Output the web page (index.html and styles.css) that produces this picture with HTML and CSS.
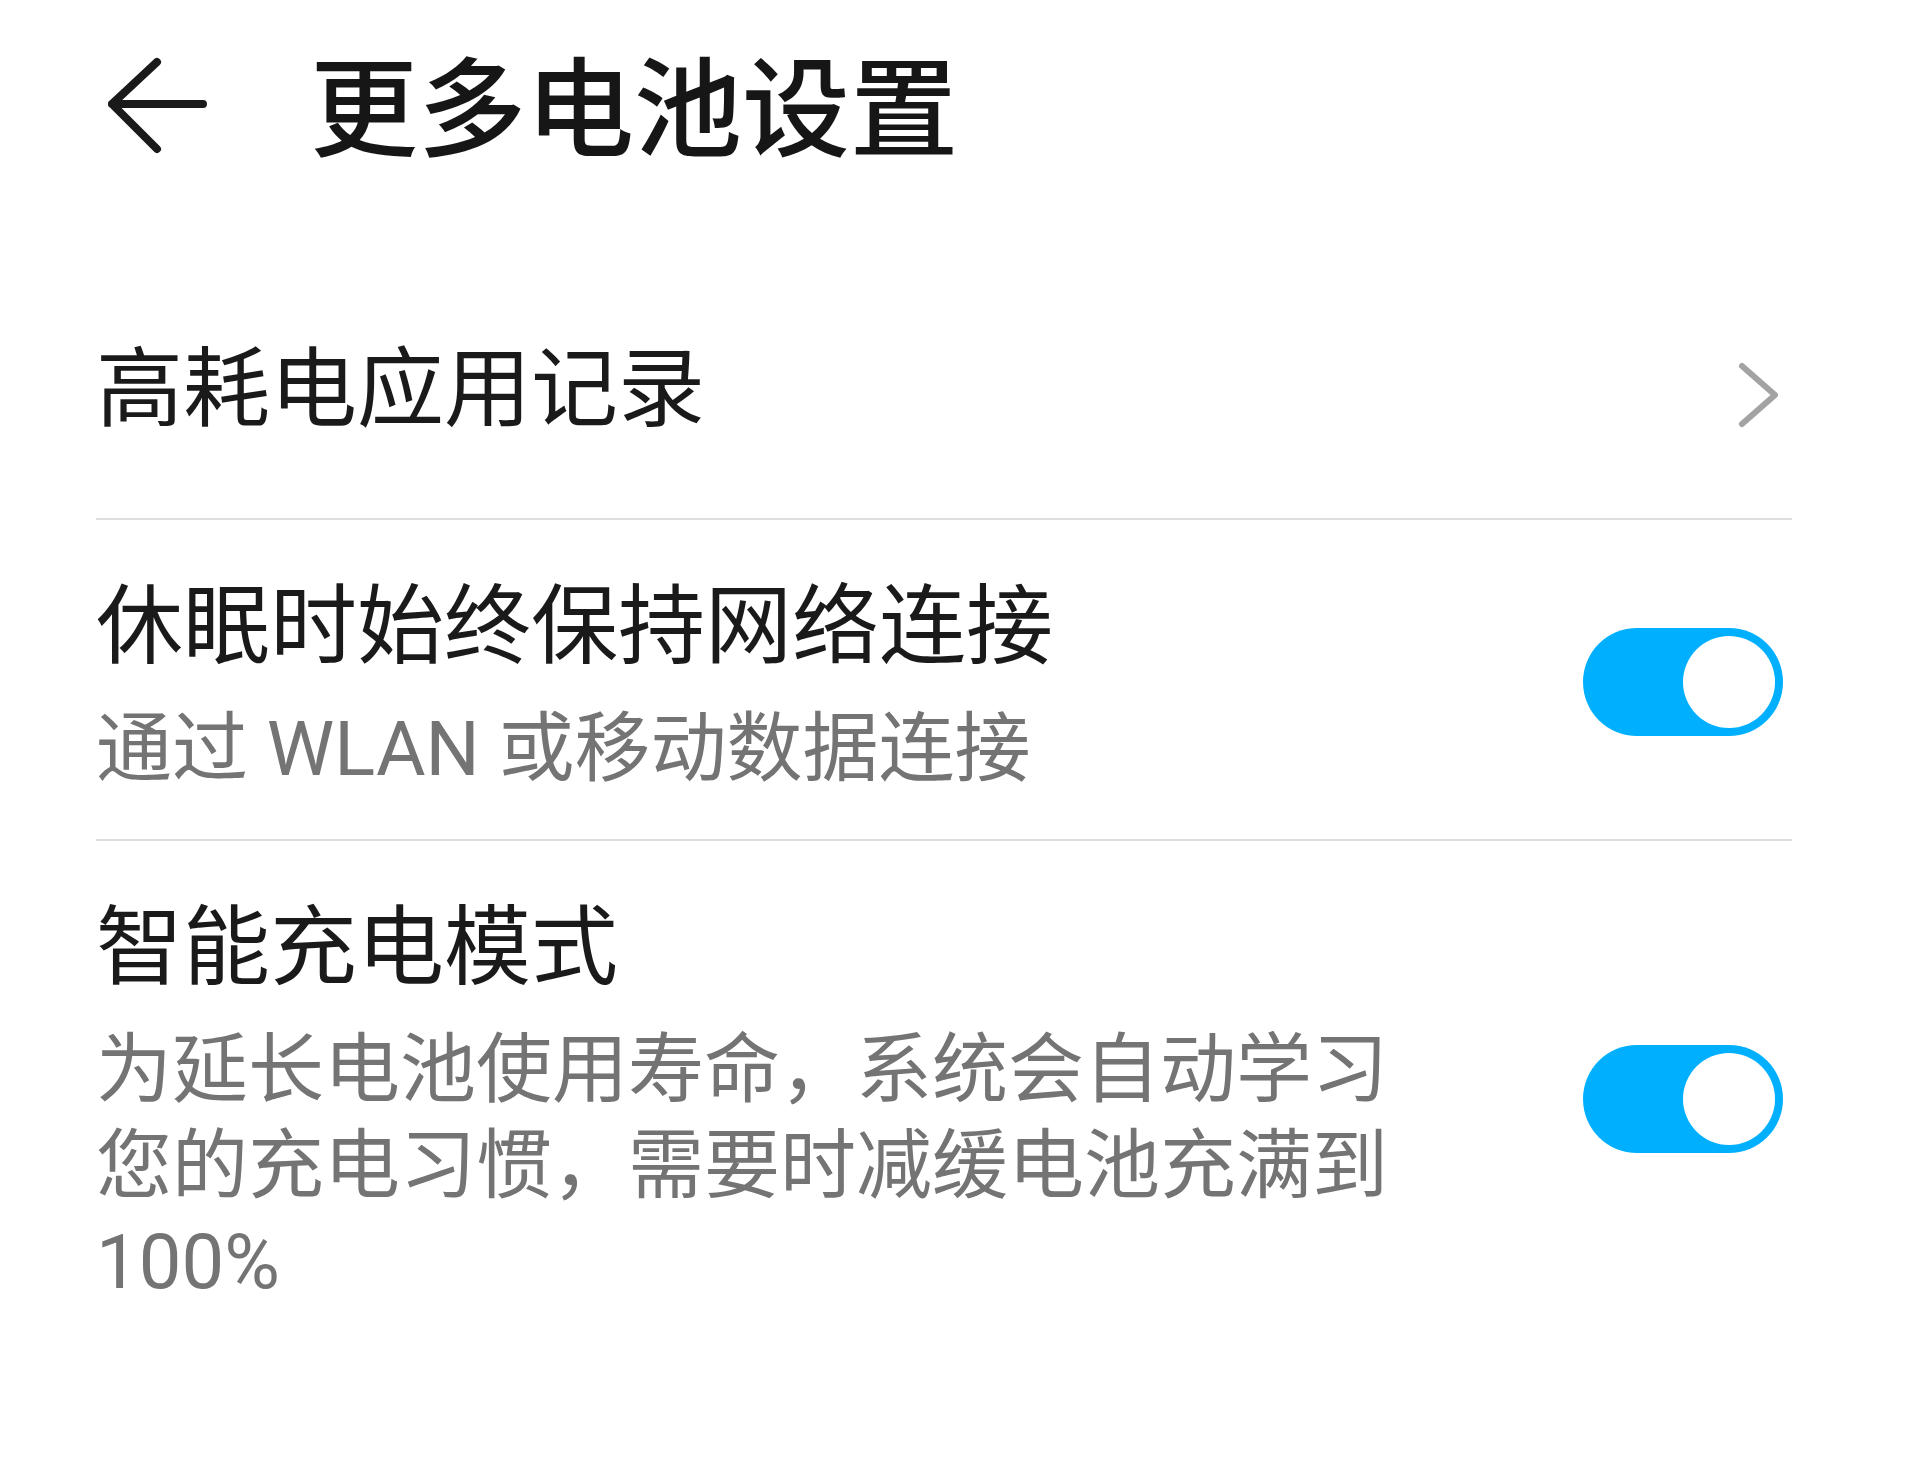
FILE: index.html
```html
<!DOCTYPE html>
<html lang="zh-CN">
<head>
    <meta charset="utf-8">
    <title>更多电池设置</title>
    <link rel="stylesheet" href="styles.css">
</head>
<body>
    <div class="page">
        <div class="header">
            <svg class="back-icon" width="100" height="100" viewBox="0 0 100 100">
                <path d="M49 8 L4 50 L49 95 M4 50 L95 50" fill="none" stroke="#1a1a1a" stroke-width="8" stroke-linecap="round" stroke-linejoin="round"/>
            </svg>
            <h1>更多电池设置</h1>
        </div>

        <div class="list">
            <div class="item item-single">
                <div class="item-text">
                    <div class="item-title">高耗电应用记录</div>
                </div>
                <svg class="chevron" width="48" height="80" viewBox="0 0 48 80">
                    <path d="M6 15 L39 44 L6 73" fill="none" stroke="#a3a3a3" stroke-width="6" stroke-linecap="round" stroke-linejoin="round"/>
                </svg>
            </div>

            <div class="item">
                <div class="item-text">
                    <div class="item-title">休眠时始终保持网络连接</div>
                    <div class="item-desc">通过 WLAN 或移动数据连接</div>
                </div>
                <div class="switch on"><span class="knob"></span></div>
            </div>

            <div class="item">
                <div class="item-text">
                    <div class="item-title">智能充电模式</div>
                    <div class="item-desc">为延长电池使用寿命，系统会自动学习您的充电习惯，需要时减缓电池充满到 100%</div>
                </div>
                <div class="switch on"><span class="knob"></span></div>
            </div>
        </div>
    </div>
</body>
</html>
```

FILE: styles.css
```css
/* Battery settings page */

body {
    margin: 0;
    padding: 0;
    background-color: #fff;
    font-family: Roboto, "Noto Sans CJK SC", sans-serif;
    color: #1a1a1a;
}

.page {
    padding: 0 128px 0 96px;
}

.header {
    display: flex;
    align-items: center;
    height: 208px;
    padding-left: 12px;
}

.back-icon {
    flex-shrink: 0;
}

h1 {
    margin: 14px 0 0 102px;
    font-size: 108px;
    line-height: 130px;
    font-weight: 500;
    color: #161616;
}

.list {
    margin-top: 47px;
}

.item {
    display: flex;
    align-items: center;
    gap: 180px;
    padding: 46px 0 42px;
    border-bottom: 2px solid #dedede;
}

.item:last-child {
    border-bottom: none;
}

.item-single {
    padding: 74px 0 66px;
}

.item-text {
    flex: 1;
}

.item-title {
    font-size: 87px;
    line-height: 123px;
    color: #1a1a1a;
}

.item-desc {
    margin-top: 12px;
    font-size: 76px;
    line-height: 96px;
    color: #747474;
}

.chevron {
    flex-shrink: 0;
    margin-right: 8px;
}

.switch {
    flex-shrink: 0;
    position: relative;
    width: 200px;
    height: 108px;
    margin-right: 9px;
    border-radius: 54px;
    background-color: #c8c8c8;
}

.switch.on {
    background-color: #00b0ff;
}

.knob {
    position: absolute;
    top: 8px;
    left: 8px;
    width: 92px;
    height: 92px;
    border-radius: 50%;
    background-color: #fff;
}

.switch.on .knob {
    left: auto;
    right: 8px;
}
```
